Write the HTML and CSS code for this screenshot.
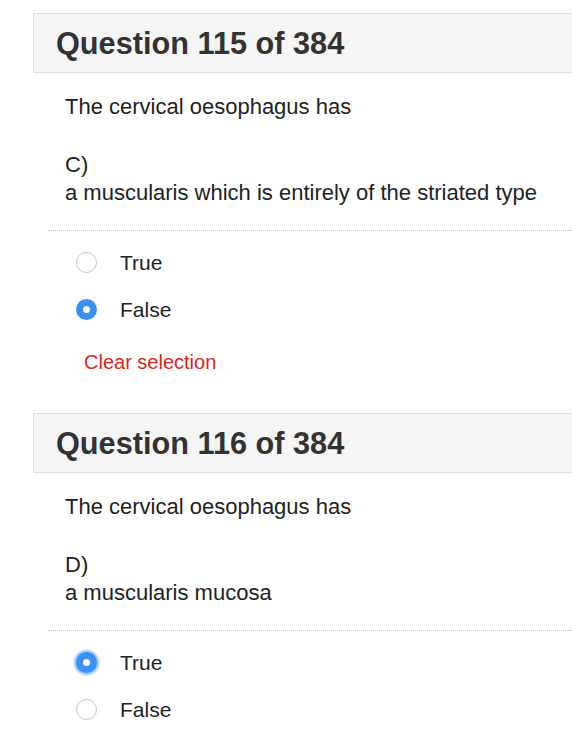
FILE: index.html
```html
<!DOCTYPE html>
<html>
<head>
<meta charset="utf-8">
<link rel="stylesheet" href="styles.css">
</head>
<body>
<div class="page">
  <section class="question">
    <div class="q-header"><h2 class="q-title">Question 115 of 384</h2></div>
    <p class="q-stem">The cervical oesophagus has</p>
    <p class="q-item">C)<br>a muscularis which is entirely of the striated type</p>
    <div class="options">
      <label class="option"><input type="radio" name="q115" class="radio"><span class="opt-label">True</span></label>
      <label class="option"><input type="radio" name="q115" class="radio" checked><span class="opt-label">False</span></label>
    </div>
    <a class="clear">Clear selection</a>
  </section>
  <section class="question">
    <div class="q-header"><h2 class="q-title">Question 116 of 384</h2></div>
    <p class="q-stem">The cervical oesophagus has</p>
    <p class="q-item">D)<br>a muscularis mucosa</p>
    <div class="options">
      <label class="option"><input type="radio" name="q116" class="radio focused" checked><span class="opt-label">True</span></label>
      <label class="option"><input type="radio" name="q116" class="radio"><span class="opt-label">False</span></label>
    </div>
  </section>
</div>
</body>
</html>
```
FILE: styles.css
```css
html, body {
  margin: 0;
  padding: 0;
  background: #fff;
  overflow: hidden;
}
body {
  font-family: "Liberation Sans", Arial, Helvetica, sans-serif;
  color: #222;
}
.page {
  padding-top: 13px;
  padding-left: 33px;
}
.question {
  display: flex;
  flex-direction: column;
  align-items: flex-start;
  padding-bottom: 37px;
}
.q-header {
  align-self: stretch;
  margin-right: -40px;
  height: 58px;
  background: #f5f5f5;
  border: 1px solid #dcdcdc;
  display: flex;
  align-items: center;
}
.q-title {
  margin: 2px 0 0 22px;
  font-size: 30.7px;
  font-weight: bold;
  color: #333;
  line-height: 1;
}
.q-stem, .q-item {
  margin: 0;
  padding-left: 32px;
  font-size: 22px;
  line-height: 28px;
  color: #222;
}
.q-stem {
  margin-top: 20px;
}
.q-item {
  margin-top: 30px;
}
.options {
  align-self: stretch;
  margin-left: 15px;
  margin-right: -40px;
  margin-top: 23px;
  border-top: 1px dotted #bdbdbd;
  padding-top: 8px;
  display: flex;
  flex-direction: column;
}
.option {
  height: 47px;
  display: flex;
  align-items: center;
  padding-left: 28px;
  gap: 23px;
}
.radio {
  appearance: none;
  -webkit-appearance: none;
  margin: 0;
  width: 21px;
  height: 21px;
  border-radius: 50%;
  border: 1.5px solid #c4c4c4;
  background: #fff;
  box-sizing: border-box;
  flex: none;
}
.radio:checked {
  border: 7px solid #3b8ff5;
  background: #fff;
}
.radio.focused {
  box-shadow: 0 0 2px 2px rgba(59, 143, 245, 0.55);
}
.opt-label {
  font-size: 21px;
  color: #222;
}
.clear {
  margin-top: 15px;
  margin-left: 51px;
  font-size: 20px;
  line-height: 28px;
  color: #d9261c;
}
```
